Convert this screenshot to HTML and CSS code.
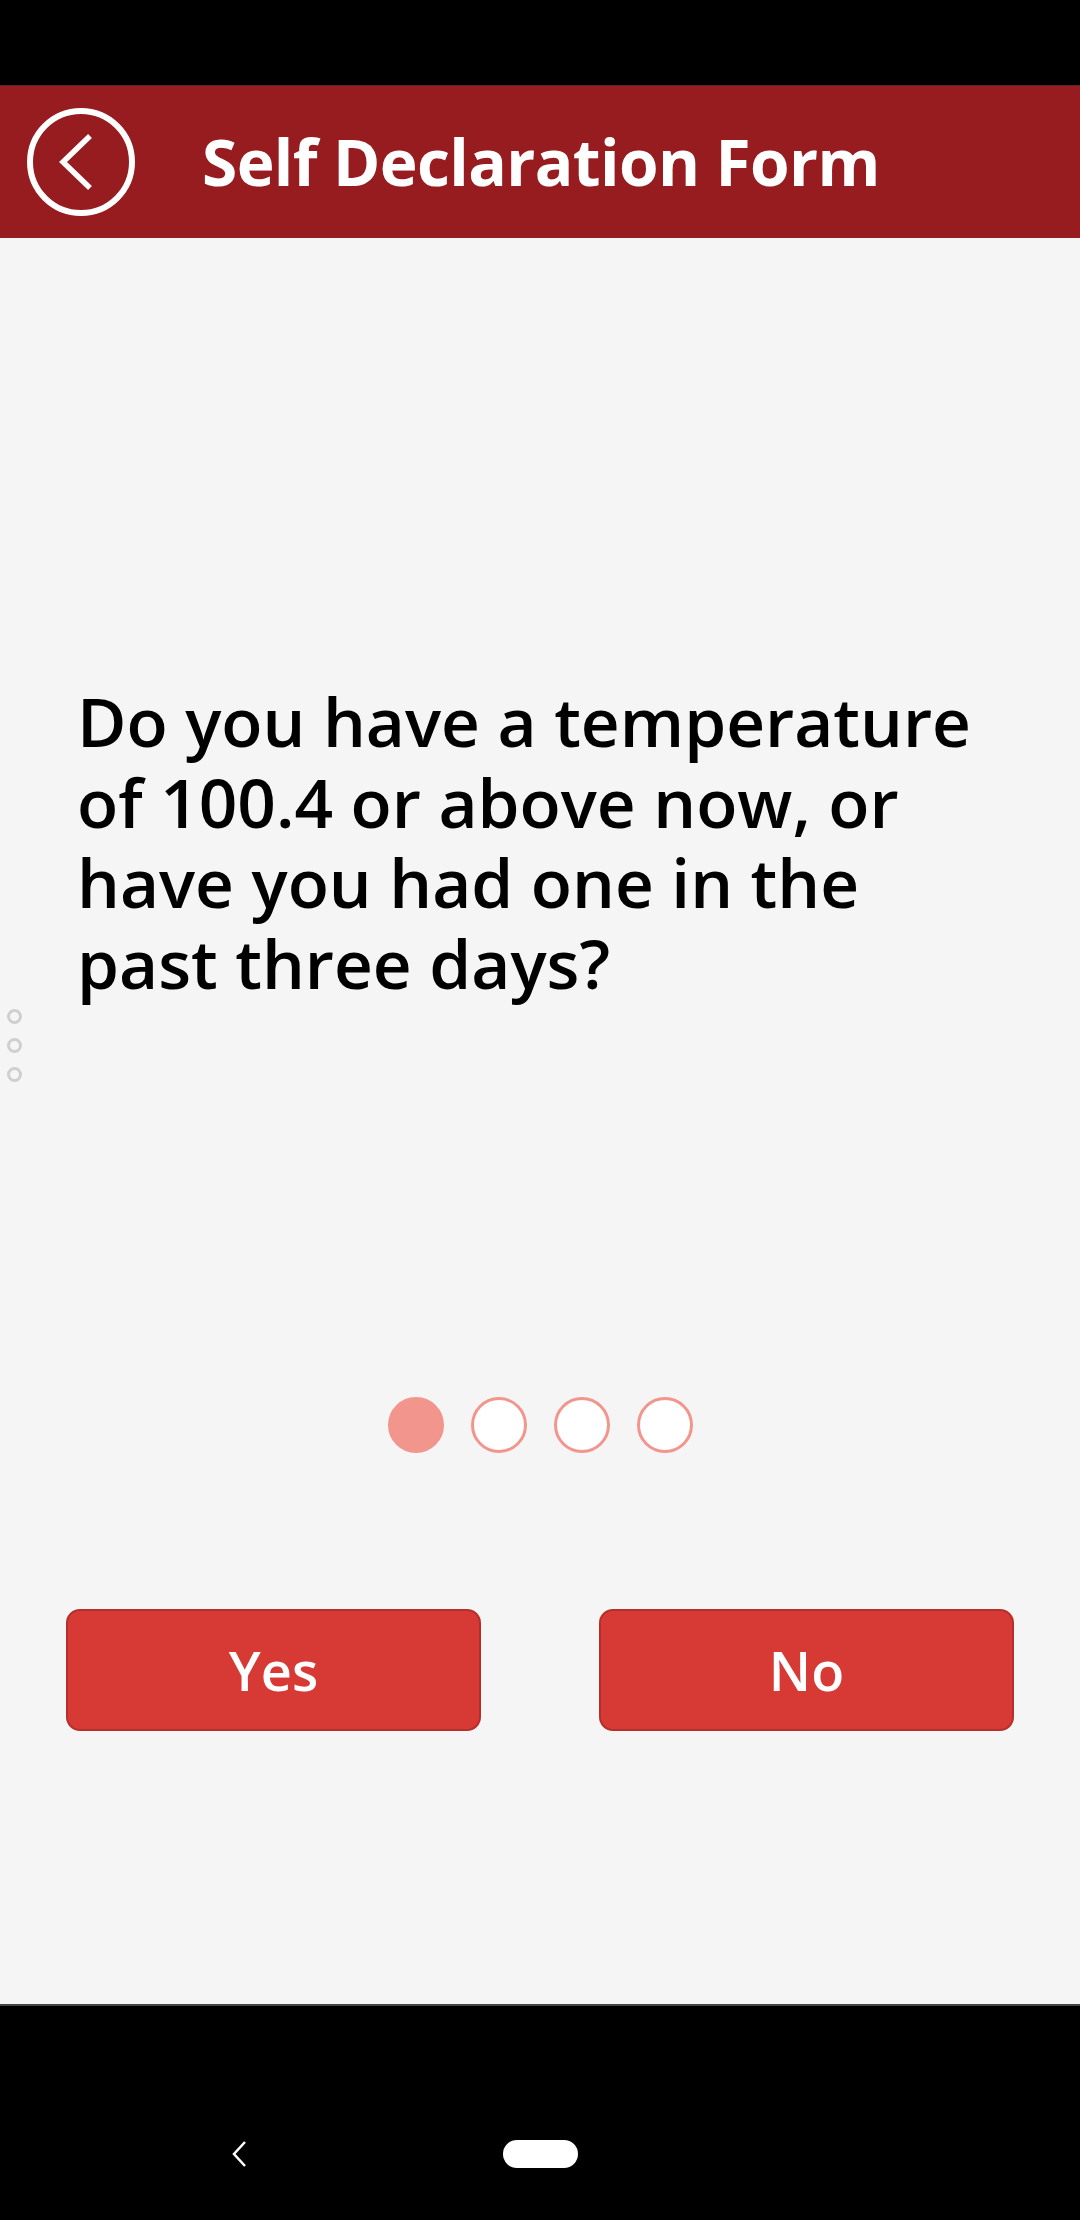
FILE: index.html
```html
<!DOCTYPE html>
<html lang="en">

<head>
    <meta charset="UTF-8" />
    <meta name="viewport" content="width=device-width, initial-scale=1.0" />
    <title>Self Declaration Form</title>
    <link rel="stylesheet" href="styles.css">
</head>

<body>

    <div class="status-bar"></div>

    <header class="app-header">
        <button class="back-btn" aria-label="Back">
            <svg width="108" height="108" viewBox="0 0 108 108">
                <circle cx="54" cy="54" r="51" fill="none" stroke="#fff" stroke-width="6" />
                <polyline points="63,28 36,54 63,80" fill="none" stroke="#fff" stroke-width="5.5" />
            </svg>
        </button>
        <h1 class="app-title">Self Declaration Form</h1>
    </header>

    <main class="content">
        <div class="handle">
            <span></span>
            <span></span>
            <span></span>
        </div>

        <p class="question">
            Do you have a temperature of 100.4 or above now, or have you had one in the past three days?
        </p>

        <div class="steps">
            <span class="step active"></span>
            <span class="step"></span>
            <span class="step"></span>
            <span class="step"></span>
        </div>

        <div class="answers">
            <button class="answer-btn">Yes</button>
            <button class="answer-btn">No</button>
        </div>
    </main>

    <nav class="nav-bar">
        <svg class="nav-back" width="18" height="28" viewBox="0 0 18 28">
            <polyline points="15,2 4,14 15,26" fill="none" stroke="#fff" stroke-width="2.5" />
        </svg>
        <span class="nav-home"></span>
    </nav>

</body>

</html>
```

FILE: styles.css
```css
html,
body {
    margin: 0;
    padding: 0;
}

body {
    width: 1080px;
    height: 2220px;
    display: flex;
    flex-direction: column;
    font-family: "Open Sans", "Noto Sans", sans-serif;
    background-color: #000;
    overflow: hidden;
}

.status-bar {
    height: 85px;
    flex-shrink: 0;
    background-color: #000;
}

.app-header {
    height: 153px;
    flex-shrink: 0;
    display: flex;
    align-items: center;
    background-color: #971c20;
    border-top: 1px solid #5a2a2a;
    box-sizing: border-box;
}

.back-btn {
    margin-left: 27px;
    padding: 0;
    border: none;
    background: none;
    display: flex;
    cursor: pointer;
}

.app-title {
    margin: 0 0 0 67px;
    color: #fff;
    font-size: 64px;
    font-weight: 700;
    letter-spacing: -0.6px;
    line-height: 1;
}

.content {
    position: relative;
    flex: 1;
    display: flex;
    flex-direction: column;
    background-color: #f5f5f5;
    border-bottom: 2px solid #444;
}

.handle {
    position: absolute;
    left: 7px;
    top: 771px;
    display: flex;
    flex-direction: column;
    gap: 14px;
}

.handle span {
    width: 9px;
    height: 9px;
    border: 3px solid #cfcfcf;
    border-radius: 50%;
}

.question {
    margin: 443px 100px 0 77px;
    color: #000;
    font-size: 67.5px;
    font-weight: 600;
    line-height: 80.5px;
}

.steps {
    margin-top: 394px;
    display: flex;
    justify-content: center;
    gap: 27px;
}

.step {
    width: 50px;
    height: 50px;
    border: 3px solid #f2958c;
    border-radius: 50%;
    background-color: #fff;
}

.step.active {
    background-color: #f2958c;
}

.answers {
    margin-top: 156px;
    padding: 0 66px;
    display: flex;
    justify-content: space-between;
}

.answer-btn {
    width: 415px;
    height: 122px;
    border: 2px solid #b52f2c;
    border-radius: 14px;
    background-color: #d73934;
    color: #fff;
    font-family: "Open Sans", "Noto Sans", sans-serif;
    font-size: 54px;
    font-weight: 600;
    cursor: pointer;
}

.nav-bar {
    height: 214px;
    flex-shrink: 0;
    display: flex;
    align-items: flex-start;
    padding-left: 230px;
    padding-top: 134px;
    box-sizing: border-box;
    background-color: #000;
}

.nav-home {
    width: 75px;
    height: 28px;
    margin-left: 255px;
    border-radius: 14px;
    background-color: #fff;
}
```
